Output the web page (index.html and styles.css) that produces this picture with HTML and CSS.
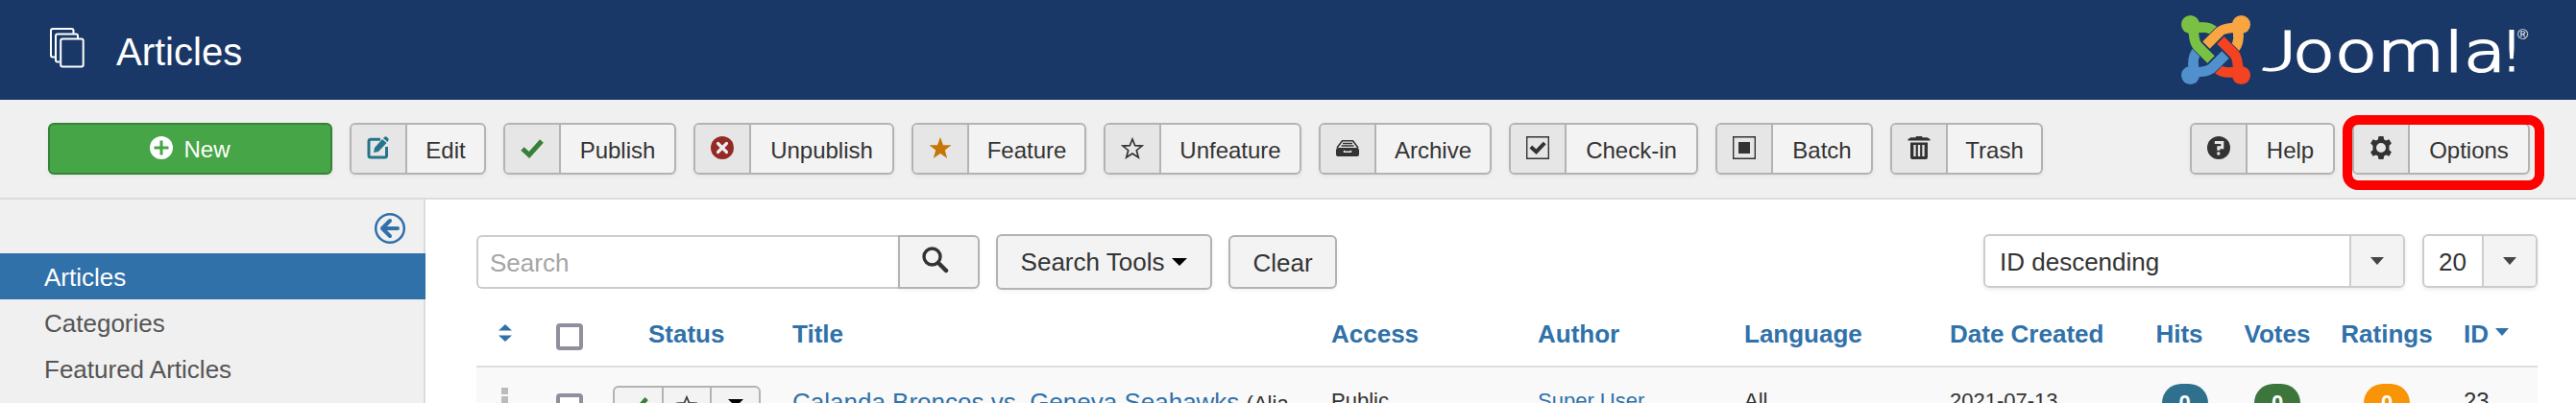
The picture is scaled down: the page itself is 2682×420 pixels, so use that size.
FILE: index.html
```html
<!DOCTYPE html>
<html lang="en">

<head>
    <meta charset="UTF-8">
    <meta name="viewport" content="width=device-width, initial-scale=1.0">
    <title>Articles - Administration</title>
    <link rel="stylesheet" href="styles.css">
</head>

<body>

    <!-- Header -->
    <header class="header">
        <svg class="header-icon" width="36" height="42" viewBox="0 0 36 42">
            <path d="M5 30.500H3a2 2 0 0 1-2-2V3a2 2 0 0 1 2-2h19.500a2 2 0 0 1 2 2V6M10 35.500H8a2 2 0 0 1-2-2V8.500a2 2 0 0 1 2-2h19a2 2 0 0 1 2 2V11" />
            <rect x="11.200" y="11.500" width="23.500" height="29" rx="2" />
        </svg>
        <h1>Articles</h1>
        <svg class="logo" width="368" height="80" viewBox="0 0 368 80">
            <defs>
                <path id="arm" d="M13 18C20 16 28 15 34.500 20.500" />
                <path id="bar" d="M12 17C14 24 12 31 17.500 36.500L31 50" />
            </defs>
            <g fill="none" stroke-width="10.500">
                <use href="#arm" stroke="#7ac143" />
                <use href="#arm" stroke="#f9a541" transform="rotate(90 36 40)" />
                <use href="#arm" stroke="#f44321" transform="rotate(180 36 40)" />
                <use href="#arm" stroke="#5091cd" transform="rotate(270 36 40)" />
            </g>
            <g fill="none" stroke="#1a3867" stroke-width="12">
                <use href="#bar" />
                <use href="#bar" transform="rotate(90 36 40)" />
                <use href="#bar" transform="rotate(180 36 40)" />
                <use href="#bar" transform="rotate(270 36 40)" />
            </g>
            <g fill="none" stroke-width="10.500">
                <use href="#arm" stroke="#7ac143" stroke-dasharray="10 40" />
                <use href="#arm" stroke="#f9a541" stroke-dasharray="10 40" transform="rotate(90 36 40)" />
                <use href="#arm" stroke="#f44321" stroke-dasharray="10 40" transform="rotate(180 36 40)" />
                <use href="#arm" stroke="#5091cd" stroke-dasharray="10 40" transform="rotate(270 36 40)" />
                <use href="#bar" stroke="#7ac143" />
                <use href="#bar" stroke="#f9a541" transform="rotate(90 36 40)" />
                <use href="#bar" stroke="#f44321" transform="rotate(180 36 40)" />
                <use href="#bar" stroke="#5091cd" transform="rotate(270 36 40)" />
            </g>
            <circle cx="9.500" cy="13.500" r="9.500" fill="#7ac143" />
            <circle cx="62.500" cy="13.500" r="9.500" fill="#f9a541" />
            <circle cx="62.500" cy="66.500" r="9.500" fill="#f44321" />
            <circle cx="9.500" cy="66.500" r="9.500" fill="#5091cd" />
            <text class="logo-text logo-j" x="84" y="62" textLength="38" lengthAdjust="spacingAndGlyphs">J</text>
            <text class="logo-text" x="116" y="62" textLength="222" lengthAdjust="spacingAndGlyphs">oomla</text>
            <text class="logo-text" x="332" y="62" textLength="24" lengthAdjust="spacingAndGlyphs">!</text>
            <text class="logo-reg" x="350" y="29">®</text>
        </svg>
    </header>

    <!-- Toolbar -->
    <div class="toolbar">
        <button class="btn btn-new">
            <svg width="24" height="24" viewBox="0 0 24 24"><circle cx="12" cy="12" r="12" fill="#fff" /><path d="M12 4.500v15M4.500 12h15" stroke="#46a546" stroke-width="3" /></svg>
            New
        </button>
        <button class="btn btn-tool w-edit">
            <span class="btn-icon"><svg width="24" height="24" viewBox="0 0 24 24"><path d="M14 3.300H4a2 2 0 0 0-2 2V20a2 2 0 0 0 2 2h14.500a2 2 0 0 0 2-2V11" fill="none" stroke="#24748c" stroke-width="3" /><path d="M7 17l1-5 8-9 4.500 4L12 16zM17 2l1.500-1.500h2l2 2v1.500L21.500 6z" fill="#24748c" /></svg></span>
            <span class="btn-label">Edit</span>
        </button>
        <button class="btn btn-tool w-publish">
            <span class="btn-icon"><svg width="24" height="24" viewBox="0 0 24 24"><path d="M2 13l7 6.500L22 5" fill="none" stroke="#378137" stroke-width="5" /></svg></span>
            <span class="btn-label">Publish</span>
        </button>
        <button class="btn btn-tool w-unpublish">
            <span class="btn-icon"><svg width="24" height="24" viewBox="0 0 24 24"><circle cx="12" cy="12" r="12" fill="#942a25" /><path d="M7.500 7.500l9 9M16.500 7.500l-9 9" stroke="#eee" stroke-width="3.200" stroke-linecap="round" /></svg></span>
            <span class="btn-label">Unpublish</span>
        </button>
        <button class="btn btn-tool w-feature">
            <span class="btn-icon"><svg width="24" height="24" viewBox="0 0 24 24"><path d="M12 1l3 8.300h8.500l-6.700 5.300 2.400 8.400-7.200-5-7.200 5 2.400-8.400L.5 9.300H9z" fill="#c67605" /></svg></span>
            <span class="btn-label">Feature</span>
        </button>
        <button class="btn btn-tool w-unfeature">
            <span class="btn-icon"><svg width="24" height="24" viewBox="0 0 24 24"><path d="M12 3l2.700 6.700 7.300.4-5.700 4.600 2 7.300-6.300-4-6.300 4 2-7.300L2 10.100l7.300-.4z" fill="none" stroke="#333" stroke-width="1.700" /></svg></span>
            <span class="btn-label">Unfeature</span>
        </button>
        <button class="btn btn-tool w-archive">
            <span class="btn-icon"><svg width="24" height="24" viewBox="0 0 24 24"><path d="M1 12L6.500 4.800h11L23 12" fill="none" stroke="#333" stroke-width="1.600" /><path d="M7 7.500h10M5.500 10h13" stroke="#333" stroke-width="1.400" /><path d="M0 13.500l1.500-1.500h21l1.500 1.500V19a2 2 0 0 1-2 2H2a2 2 0 0 1-2-2z" fill="#333" /><path d="M8.500 14.800v1.400h7v-1.400" fill="none" stroke="#e6e6e6" stroke-width="1.400" /></svg></span>
            <span class="btn-label">Archive</span>
        </button>
        <button class="btn btn-tool w-checkin">
            <span class="btn-icon"><svg width="24" height="24" viewBox="0 0 24 24"><path d="M.7.7h22.600v22.600H.7z" fill="none" stroke="#333" stroke-width="1.400" /><path d="M4.800 11l5.700 5.200L19.200 7" fill="none" stroke="#333" stroke-width="4" /></svg></span>
            <span class="btn-label">Check-in</span>
        </button>
        <button class="btn btn-tool w-batch">
            <span class="btn-icon"><svg width="24" height="24" viewBox="0 0 24 24"><path d="M.7.7h22.600v22.600H.7z" fill="none" stroke="#333" stroke-width="1.400" /><path d="M6 6h12v12H6z" fill="#333" /></svg></span>
            <span class="btn-label">Batch</span>
        </button>
        <button class="btn btn-tool w-trash">
            <span class="btn-icon"><svg width="24" height="24" viewBox="0 0 24 24"><path d="M.5 4.500V3l3-1.700h5L9 0h6l.5 1.300h5l3 1.700v1.500zM3 6.500h18V22a2 2 0 0 1-2 2H5a2 2 0 0 1-2-2z" fill="#333" /><path d="M7.500 9v12M12 9v12M16.500 9v12" stroke="#e6e6e6" stroke-width="2.300" /></svg></span>
            <span class="btn-label">Trash</span>
        </button>
        <button class="btn btn-tool w-help push-right">
            <span class="btn-icon"><svg width="24" height="24" viewBox="0 0 24 24"><circle cx="12" cy="12" r="12" fill="#333" /><path d="M7.800 6.500h8v5.200h-4v3" fill="none" stroke="#e6e6e6" stroke-width="3" /><path d="M10.300 16.500h3v3h-3z" fill="#e6e6e6" /></svg></span>
            <span class="btn-label">Help</span>
        </button>
        <div class="options">
            <button class="btn btn-tool w-options">
                <span class="btn-icon"><svg width="24" height="24" viewBox="0 0 24 24"><path fill="#333" fill-rule="evenodd" d="M9.500 0h5l.6 3.300 2 1.200 3.300-1.200 2.500 4.200-2.400 2.200v4.600l2.400 2.200-2.500 4.200-3.300-1.200-2 1.200-.6 3.300h-5l-.6-3.300-2-1.200-3.300 1.200-2.500-4.200 2.400-2.200V9.700L1.100 7.500l2.500-4.200 3.300 1.200 2-1.200zM12 7a5 5 0 1 0 0 10 5 5 0 0 0 0-10z" /></svg></span>
                <span class="btn-label">Options</span>
            </button>
            <span class="highlight"></span>
        </div>
    </div>

    <div class="content">

        <!-- Sidebar -->
        <nav class="sidebar">
            <div class="collapse">
                <svg width="34" height="34" viewBox="0 0 34 34"><circle cx="17" cy="17" r="14.800" /><path class="arrow" d="M25 17H9M17 9l-8 8 8 8" /></svg>
            </div>
            <a class="active">Articles</a>
            <a>Categories</a>
            <a>Featured Articles</a>
        </nav>

        <main class="main">
            <!-- Filters -->
            <div class="filters">
                <div class="search">
                    <input type="text" placeholder="Search">
                    <button class="btn btn-search"><svg width="28" height="28" viewBox="0 0 28 28"><circle cx="10.500" cy="10.500" r="8.500" fill="none" stroke="#333" stroke-width="3.400" /><path d="M17 17l8 8" stroke="#333" stroke-width="4.500" stroke-linecap="round" /></svg></button>
                </div>
                <button class="btn btn-tools">Search Tools <span class="caret"></span></button>
                <button class="btn btn-clear">Clear</button>
                <div class="select select-order"><span class="select-value">ID descending</span><span class="select-arrow"><i class="caret"></i></span></div>
                <div class="select select-limit"><span class="select-value">20</span><span class="select-arrow"><i class="caret"></i></span></div>
            </div>

            <!-- Article list -->
            <div class="row row-head">
                <span class="cell-sort"><svg width="14" height="18" viewBox="0 0 14 18"><path d="M0 6.500L7 0l7 6.500zM0 11.500L7 18l7-6.500z" fill="#3071a9" /></svg></span>
                <span><i class="checkbox"></i></span>
                <span class="cell-status">Status</span>
                <span>Title</span>
                <span>Access</span>
                <span>Author</span>
                <span>Language</span>
                <span>Date Created</span>
                <span class="cell-num cell-hits">Hits</span>
                <span class="cell-num">Votes</span>
                <span class="cell-num">Ratings</span>
                <span class="cell-id">ID <i class="caret"></i></span>
            </div>
            <div class="row row-item">
                <span class="cell-drag"><i></i><i></i><i></i></span>
                <span><i class="checkbox"></i></span>
                <span class="status-group">
                    <i><svg width="22" height="22" viewBox="0 0 24 24"><path d="M2 13l7 6.500L22 5" fill="none" stroke="#378137" stroke-width="5" /></svg></i>
                    <i><svg width="22" height="22" viewBox="0 0 24 24"><path d="M12 3l2.700 6.700 7.300.4-5.700 4.600 2 7.300-6.300-4-6.300 4 2-7.300L2 10.100l7.300-.4z" fill="none" stroke="#333" stroke-width="1.700" /></svg></i>
                    <i><span class="caret"></span></i>
                </span>
                <span class="cell-title"><a>Calanda Broncos vs. Geneva Seahawks</a> <small>(Alia</small></span>
                <span>Public</span>
                <span><a>Super User</a></span>
                <span>All</span>
                <span>2021-07-13</span>
                <span class="cell-num"><b class="badge badge-hits">0</b></span>
                <span class="cell-num"><b class="badge badge-votes">0</b></span>
                <span class="cell-num"><b class="badge badge-ratings">0</b></span>
                <span class="cell-id">23</span>
            </div>
        </main>
    </div>

</body>

</html>
```
FILE: styles.css
```css
/* General Styles */
* {
    box-sizing: border-box;
}

body {
    margin: 0;
    height: 420px;
    overflow: hidden;
    font-family: "Liberation Sans", Arial, sans-serif;
    font-size: 26px;
    color: #333;
    background-color: #fff;
}

svg {
    display: block;
    flex-shrink: 0;
}

/* Header */
.header {
    display: flex;
    align-items: center;
    height: 104px;
    padding: 0 43px 0 52px;
    background-color: #1a3867;
    color: #fff;
}

.header-icon {
    margin-bottom: 5px;
    fill: none;
    stroke: #fff;
    stroke-width: 2;
}

.header h1 {
    margin: 4px 0 0 33px;
    font-size: 40px;
    font-weight: normal;
    line-height: 48px;
}

.logo {
    margin-left: auto;
}

.logo-text {
    font-family: "DejaVu Sans", sans-serif;
    font-weight: 200;
    font-size: 57px;
    fill: #fff;
    stroke: #fff;
    stroke-width: 2;
}

.logo-j {
    font-family: Lato, sans-serif;
    font-weight: 300;
    font-size: 60px;
    stroke-width: 1;
}

.logo-reg {
    font-size: 15px;
    fill: #fff;
}

/* Toolbar */
.toolbar {
    display: flex;
    gap: 18px;
    height: 104px;
    padding: 24px 48px 0 50px;
    background-color: #f0f0f0;
    border-bottom: 2px solid #dcdcdc;
}

.btn {
    display: flex;
    align-items: center;
    justify-content: center;
    height: 54px;
    padding: 0;
    font-family: inherit;
    font-size: 24px;
    color: #333;
    background-color: #f3f3f3;
    border: 2px solid #b3b3b3;
    border-radius: 6px;
    box-shadow: 0 2px 4px rgba(0, 0, 0, 0.05);
}

.btn-new {
    width: 296px;
    gap: 11px;
    padding-top: 2px;
    color: #fff;
    background-color: #46a546;
    border-color: #378137;
}

.btn-new svg {
    margin-bottom: 4px;
}

.btn-tool {
    align-items: stretch;
    overflow: hidden;
}

.btn-icon {
    display: flex;
    align-items: center;
    justify-content: center;
    width: 58px;
    padding-bottom: 2px;
    background-color: #e6e6e6;
    border-right: 2px solid #b3b3b3;
}

.btn-label {
    flex: 1;
    padding-top: 2px;
    line-height: 50px;
}

.w-edit { width: 142px; }
.w-publish { width: 180px; }
.w-unpublish { width: 209px; }
.w-feature { width: 182px; }
.w-unfeature { width: 206px; }
.w-archive { width: 180px; }
.w-checkin { width: 197px; }
.w-batch { width: 164px; }
.w-trash { width: 159px; }
.w-help { width: 151px; }
.w-options { width: 185px; }

.push-right {
    margin-left: auto;
}

.options {
    position: relative;
}

.highlight {
    position: absolute;
    top: -8px;
    left: -10px;
    width: 210px;
    height: 78px;
    border: 10px solid #f00;
    border-radius: 16px;
}

/* Content */
.content {
    display: flex;
    height: 212px;
    overflow: hidden;
}

.sidebar {
    width: 443px;
    background-color: #f0f0f0;
    border-right: 2px solid #dcdcdc;
}

.sidebar a {
    display: block;
    height: 48px;
    padding: 2px 0 0 46px;
    line-height: 46px;
    color: #555;
}

.sidebar .active {
    margin-right: -2px;
    color: #fff;
    background-color: #3071a9;
}

.collapse {
    display: flex;
    justify-content: flex-end;
    height: 56px;
    padding: 13px 18px 0 0;
}

.collapse svg {
    fill: none;
    stroke: #3071a9;
    stroke-width: 2.5;
}

.collapse .arrow {
    stroke-width: 4;
    stroke-linecap: round;
    stroke-linejoin: round;
}

.main {
    flex: 1;
    padding: 36px 40px 0 53px;
}

/* Filters */
.filters {
    display: flex;
    align-items: center;
    height: 58px;
}

.filters .btn {
    height: 56px;
    padding-top: 2px;
    font-size: 26px;
}

.search {
    display: flex;
    width: 524px;
    margin-right: 17px;
}

.search input {
    width: 439px;
    height: 56px;
    padding: 2px 12px 0;
    font-family: inherit;
    font-size: 26px;
    border: 2px solid #ccc;
    border-right: none;
    border-radius: 6px 0 0 6px;
}

.search input::placeholder {
    color: #a5a5a5;
}

.search .btn-search {
    flex: 1;
    padding: 0 8px 4px 0;
    border-radius: 0 6px 6px 0;
}

.caret {
    display: inline-block;
    border: 8px solid transparent;
    border-top-color: #000;
    border-bottom: none;
}

.filters .btn-tools {
    width: 225px;
    height: 58px;
    gap: 8px;
    padding-top: 0;
    margin-right: 17px;
}

.btn-clear {
    width: 113px;
}

.select {
    display: flex;
    height: 56px;
    margin-bottom: 2px;
    border: 2px solid #ccc;
    border-radius: 6px;
    box-shadow: 0 2px 4px rgba(0, 0, 0, 0.08);
    overflow: hidden;
}

.select-order {
    width: 439px;
    margin: 0 18px 2px auto;
}

.select-limit {
    width: 120px;
}

.select-value {
    flex: 1;
    padding: 2px 0 0 15px;
    line-height: 50px;
}

.select-arrow {
    display: flex;
    align-items: center;
    justify-content: center;
    width: 56px;
    background-color: #f3f3f3;
    border-left: 2px solid #ccc;
}

.select-arrow .caret {
    border-width: 8px 7px 0;
    border-top-color: #444;
}

/* Article list */
.row {
    display: grid;
    grid-template-columns: 83px 59px 187px 561px 215px 215px 214px 192px 105px 88px 140px 1fr;
}

.row-head {
    height: 79px;
    padding-top: 28px;
    font-weight: bold;
    line-height: 36px;
    color: #3071a9;
}

.checkbox {
    display: block;
    width: 28px;
    height: 28px;
    border: 4px solid #8f8f9d;
    border-radius: 4px;
    background-color: #fff;
}

.row-head .checkbox {
    margin-top: 7px;
}

.cell-sort {
    padding: 8px 0 0 23px;
}

.cell-status {
    padding-left: 37px;
}

.cell-num {
    text-align: center;
}

.cell-hits {
    padding-right: 11px;
}

.cell-id {
    padding-left: 10px;
}

.cell-id .caret {
    margin-bottom: 7px;
    border-width: 8px 7px 0;
    border-top-color: #3071a9;
}

.row-item {
    height: 60px;
    padding-top: 19px;
    font-size: 22px;
    line-height: 31px;
    background-color: #f9f9f9;
    border-top: 2px solid #ddd;
}

.row-item a {
    color: #3071a9;
}

.row-item .cell-id {
    font-size: 24px;
}

.row-item .checkbox {
    margin-top: 8px;
}

.cell-drag {
    display: flex;
    flex-direction: column;
    gap: 2px;
    padding: 2px 0 0 26px;
}

.cell-drag i {
    width: 7px;
    height: 7px;
    background-color: #bbb;
}

.status-group {
    display: flex;
    width: 154px;
    height: 40px;
    border: 2px solid #b3b3b3;
    border-radius: 6px;
    background-color: #f3f3f3;
}

.status-group i {
    display: flex;
    flex: 1;
    justify-content: center;
    padding-top: 7px;
}

.status-group i + i {
    border-left: 2px solid #b3b3b3;
}

.status-group .caret {
    height: 0;
    margin-top: 5px;
}

.cell-title {
    font-size: 26px;
    line-height: 34px;
    white-space: nowrap;
}

.cell-title small {
    font-size: 22px;
}

.badge {
    display: block;
    width: 48px;
    height: 40px;
    margin: -2px auto 0;
    padding-top: 4px;
    border-radius: 20px;
    color: #fff;
}

.badge-hits { background-color: #30708f; }
.badge-votes { background-color: #3c763d; }
.badge-ratings { background-color: #f89406; }
```
